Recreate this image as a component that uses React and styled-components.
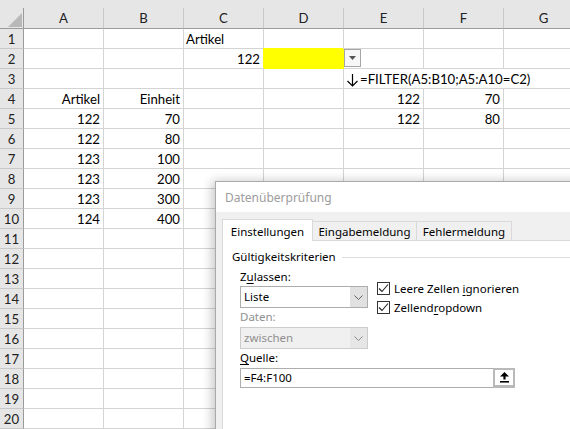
import React from "react";
import styled, { createGlobalStyle } from "styled-components";

const GlobalStyle = createGlobalStyle`
  html, body {
    margin: 0;
    padding: 0;
    background: #fff;
  }
  * {
    box-sizing: border-box;
  }
`;

const Screen = styled.div`
  position: relative;
  width: 570px;
  height: 429px;
  overflow: hidden;
  background: #fff;
  font-family: Lato, "Liberation Sans", sans-serif;
`;

const TopStrip = styled.div`
  height: 8px;
  background: #e6e6e6;
`;

const Grid = styled.div`
  display: grid;
  grid-template-columns: 24px repeat(7, 80px);
  grid-template-rows: 21px repeat(20, 20px);
  font-size: 13.2px;
  color: #000;
`;

const Corner = styled.div`
  display: flex;
  justify-content: flex-end;
  align-items: flex-end;
  padding: 0 1px 1px 0;
  background: #e6e6e6;
  border-right: 1px solid #9b9b9b;
  border-bottom: 1px solid #9b9b9b;
`;

const ColHead = styled.div`
  background: #e6e6e6;
  border-right: 1px solid #c8c8c8;
  border-bottom: 1px solid #9b9b9b;
  text-align: center;
  line-height: 20px;
  color: #222;
`;

const RowHead = styled.div`
  background: #e6e6e6;
  border-right: 1px solid #9b9b9b;
  border-bottom: 1px solid #c8c8c8;
  text-align: center;
  line-height: 20px;
  color: #222;
`;

const Cell = styled.div`
  grid-column: span ${({ $span }) => $span || 1};
  display: flex;
  align-items: flex-start;
  justify-content: ${({ $align }) => ($align === "right" ? "flex-end" : "flex-start")};
  padding: ${({ $flush }) => ($flush ? "0" : "0 3px 0 2px")};
  border-right: 1px solid ${({ $fill }) => $fill || "#d4d4d4"};
  border-bottom: 1px solid ${({ $fill }) => $fill || "#d4d4d4"};
  background: ${({ $fill }) => $fill || "#fff"};
  box-shadow: ${({ $fill }) => ($fill ? `-1px -1px 0 0 ${$fill}` : "none")};
  line-height: 20px;
  white-space: nowrap;
`;

const DropButton = styled.div`
  width: 17px;
  height: 18px;
  display: flex;
  align-items: center;
  justify-content: center;
  border: 1px solid #a6a6a6;
  background: #f7f7f7;
`;

const Formula = styled.span`
  display: flex;
  align-items: center;
  gap: 1px;
`;

/* dialog */

const Dialog = styled.div`
  position: absolute;
  left: 215px;
  top: 181px;
  width: 380px;
  height: 270px;
  display: flex;
  flex-direction: column;
  border: 1px solid #aaa;
  background: #f0f0f0;
  box-shadow: -3px 0 10px rgba(0, 0, 0, 0.22);
  font-family: "Noto Sans", "Open Sans", sans-serif;
  font-size: 11.5px;
  color: #000;
`;

const TitleBar = styled.div`
  height: 30px;
  display: flex;
  align-items: center;
  padding-left: 9px;
  background: #fff;
  color: #9c9c9c;
  font-size: 12px;
`;

const Body = styled.div`
  flex: 1;
  display: flex;
  flex-direction: column;
  padding: 7px 0 0 6px;
`;

const TabRow = styled.div`
  display: flex;
  align-items: flex-end;
  height: 21px;
`;

const Tab = styled.div`
  position: relative;
  z-index: ${({ $active }) => ($active ? 1 : 0)};
  width: ${({ $w }) => $w}px;
  height: ${({ $active }) => ($active ? 22 : 19)}px;
  margin-left: ${({ $first }) => ($first ? 0 : -1)}px;
  margin-bottom: ${({ $active }) => ($active ? -1 : 0)}px;
  display: flex;
  align-items: center;
  justify-content: center;
  padding-top: ${({ $active }) => ($active ? 2 : 1)}px;
  border: 1px solid #d9d9d9;
  border-bottom: none;
  background: ${({ $active }) => ($active ? "#fff" : "#f0f0f0")};
`;

const Panel = styled.div`
  flex: 1;
  padding: 9px 0 0 9px;
  border: 1px solid #d9d9d9;
  background: #fff;
`;

const GroupTitle = styled.div`
  display: flex;
  align-items: center;
  gap: 6px;
  height: 14px;
  line-height: 14px;
`;

const GroupLine = styled.div`
  flex: 1;
  height: 1px;
  background: #dcdcdc;
`;

const Form = styled.div`
  padding-left: 8px;
`;

const FormRow = styled.div`
  display: flex;
  gap: 9px;
`;

const Column = styled.div`
  display: flex;
  flex-direction: column;
  width: ${({ $w }) => ($w ? `${$w}px` : "auto")};
`;

const Label = styled.div`
  height: 14px;
  line-height: 14px;
  margin-top: ${({ $mt }) => $mt}px;
  color: ${({ $disabled }) => ($disabled ? "#8f8f8f" : "#000")};
`;

const Key = styled.span`
  text-decoration: underline;
  text-underline-offset: 2px;
`;

const Select = styled.div`
  display: flex;
  height: 22px;
  margin-top: ${({ $mt }) => $mt}px;
  border: 1px solid ${({ $disabled }) => ($disabled ? "#cccccc" : "#adadad")};
  background: ${({ $disabled }) => ($disabled ? "#f0f0f0" : "#fff")};
  color: ${({ $disabled }) => ($disabled ? "#8f8f8f" : "#000")};
`;

const SelectValue = styled.div`
  flex: 1;
  padding-left: 3px;
  line-height: 20px;
`;

const SelectButton = styled.div`
  width: 17px;
  display: flex;
  align-items: center;
  justify-content: center;
  background: ${({ $disabled }) => ($disabled ? "#e6e6e6" : "#e1e1e1")};
`;

const Checks = styled.div`
  display: flex;
  flex-direction: column;
  gap: 6px;
  margin-top: 18px;
`;

const CheckRow = styled.div`
  display: flex;
  align-items: center;
  gap: 4px;
  height: 13px;
  line-height: 13px;
`;

const Box = styled.div`
  width: 13px;
  height: 13px;
  display: flex;
  align-items: center;
  justify-content: center;
  border: 1px solid #333;
  background: #fff;
`;

const RefInput = styled.div`
  display: flex;
  width: 275px;
  height: 20px;
  margin-top: 3px;
  border: 1px solid #adadad;
  background: #fff;
`;

const RefValue = styled.div`
  flex: 1;
  padding-left: 3px;
  line-height: 18px;
`;

const RefButton = styled.div`
  width: 22px;
  margin: -1px -1px -1px 0;
  display: flex;
  align-items: center;
  justify-content: center;
  border: 2px solid #b9b9b9;
  border-bottom-width: 3px;
  background: #fff;
`;

const Chevron = ({ color }) => (
  <svg width="9" height="5" viewBox="0 0 9 5">
    <polyline points="0.5,0.5 4.5,4.5 8.5,0.5" fill="none" stroke={color} strokeWidth="1" />
  </svg>
);

const Check = () => (
  <svg width="11" height="11" viewBox="0 0 11 11">
    <polyline points="1,5.5 4,8.5 10,1.5" fill="none" stroke="#222" strokeWidth="1.1" />
  </svg>
);

const cols = ["A", "B", "C", "D", "E", "F", "G"];

const rows = {
  1: { C: { text: "Artikel" } },
  2: { C: { text: "122", align: "right" }, D: { fill: "#ffff00" }, E: { drop: true } },
  3: { E: { formula: "=FILTER(A5:B10;A5:A10=C2)", span: 3 } },
  4: {
    A: { text: "Artikel", align: "right" },
    B: { text: "Einheit", align: "right" },
    E: { text: "122", align: "right" },
    F: { text: "70", align: "right" },
  },
  5: {
    A: { text: "122", align: "right" },
    B: { text: "70", align: "right" },
    E: { text: "122", align: "right" },
    F: { text: "80", align: "right" },
  },
  6: { A: { text: "122", align: "right" }, B: { text: "80", align: "right" } },
  7: { A: { text: "123", align: "right" }, B: { text: "100", align: "right" } },
  8: { A: { text: "123", align: "right" }, B: { text: "200", align: "right" } },
  9: { A: { text: "123", align: "right" }, B: { text: "300", align: "right" } },
  10: { A: { text: "124", align: "right" }, B: { text: "400", align: "right" } },
};

const renderRow = (n) => {
  const data = rows[n] || {};
  const cells = [];
  let skip = 0;
  cols.forEach((c) => {
    if (skip > 0) {
      skip--;
      return;
    }
    const d = data[c] || {};
    if (d.span) skip = d.span - 1;
    let content = d.text;
    if (d.drop) {
      content = (
        <DropButton>
          <svg width="7" height="4" viewBox="0 0 7 4">
            <polygon points="0,0 7,0 3.5,4" fill="#555" />
          </svg>
        </DropButton>
      );
    }
    if (d.formula) {
      content = (
        <Formula>
          <svg width="13" height="15" viewBox="0 0 13 15">
            <line x1="6.5" y1="2" x2="6.5" y2="14" stroke="#000" strokeWidth="1.2" />
            <polyline points="1.5,9 6.5,14 11.5,9" fill="none" stroke="#000" strokeWidth="1.2" />
          </svg>
          {d.formula}
        </Formula>
      );
    }
    cells.push(
      <Cell key={c} $align={d.align} $fill={d.fill} $span={d.span} $flush={d.drop}>
        {content}
      </Cell>
    );
  });
  return cells;
};

const App = () => {
  const rowNums = Array.from({ length: 20 }, (_, i) => i + 1);
  return (
    <Screen>
      <GlobalStyle />
      <TopStrip />
      <Grid>
        <Corner>
          <svg width="14" height="14" viewBox="0 0 14 14">
            <polygon points="14,0 14,14 0,14" fill="#b8b8b8" />
          </svg>
        </Corner>
        {cols.map((c) => (
          <ColHead key={c}>{c}</ColHead>
        ))}
        {rowNums.map((n) => (
          <React.Fragment key={n}>
            <RowHead>{n}</RowHead>
            {renderRow(n)}
          </React.Fragment>
        ))}
      </Grid>

      <Dialog>
        <TitleBar>Datenüberprüfung</TitleBar>
        <Body>
          <TabRow>
            <Tab $active $first $w={91}>
              Einstellungen
            </Tab>
            <Tab $w={105}>Eingabemeldung</Tab>
            <Tab $w={96}>Fehlermeldung</Tab>
          </TabRow>
          <Panel>
            <GroupTitle>
              Gültigkeitskriterien
              <GroupLine />
            </GroupTitle>
            <Form>
              <FormRow>
                <Column $w={128}>
                  <Label $mt={6}>
                    Z<Key>u</Key>lassen:
                  </Label>
                  <Select $mt={2}>
                    <SelectValue>Liste</SelectValue>
                    <SelectButton>
                      <Chevron color="#606060" />
                    </SelectButton>
                  </Select>
                  <Label $mt={2} $disabled>
                    Daten:
                  </Label>
                  <Select $mt={3} $disabled>
                    <SelectValue>zwischen</SelectValue>
                    <SelectButton $disabled>
                      <Chevron color="#8a8a8a" />
                    </SelectButton>
                  </Select>
                </Column>
                <Checks>
                  <CheckRow>
                    <Box>
                      <Check />
                    </Box>
                    <span>
                      Leere Zellen <Key>i</Key>gnorieren
                    </span>
                  </CheckRow>
                  <CheckRow>
                    <Box>
                      <Check />
                    </Box>
                    <span>
                      Zellend<Key>r</Key>opdown
                    </span>
                  </CheckRow>
                </Checks>
              </FormRow>
              <Label $mt={2}>
                <Key>Q</Key>uelle:
              </Label>
              <RefInput>
                <RefValue>=F4:F100</RefValue>
                <RefButton>
                  <svg width="9" height="11" viewBox="0 0 9 11">
                    <polygon points="4.5,0 9,4.5 5.6,4.5 5.6,7.5 3.4,7.5 3.4,4.5 0,4.5" fill="#000" />
                    <rect x="0" y="9" width="9" height="1.6" fill="#000" />
                  </svg>
                </RefButton>
              </RefInput>
            </Form>
          </Panel>
        </Body>
      </Dialog>
    </Screen>
  );
};

export default App;
